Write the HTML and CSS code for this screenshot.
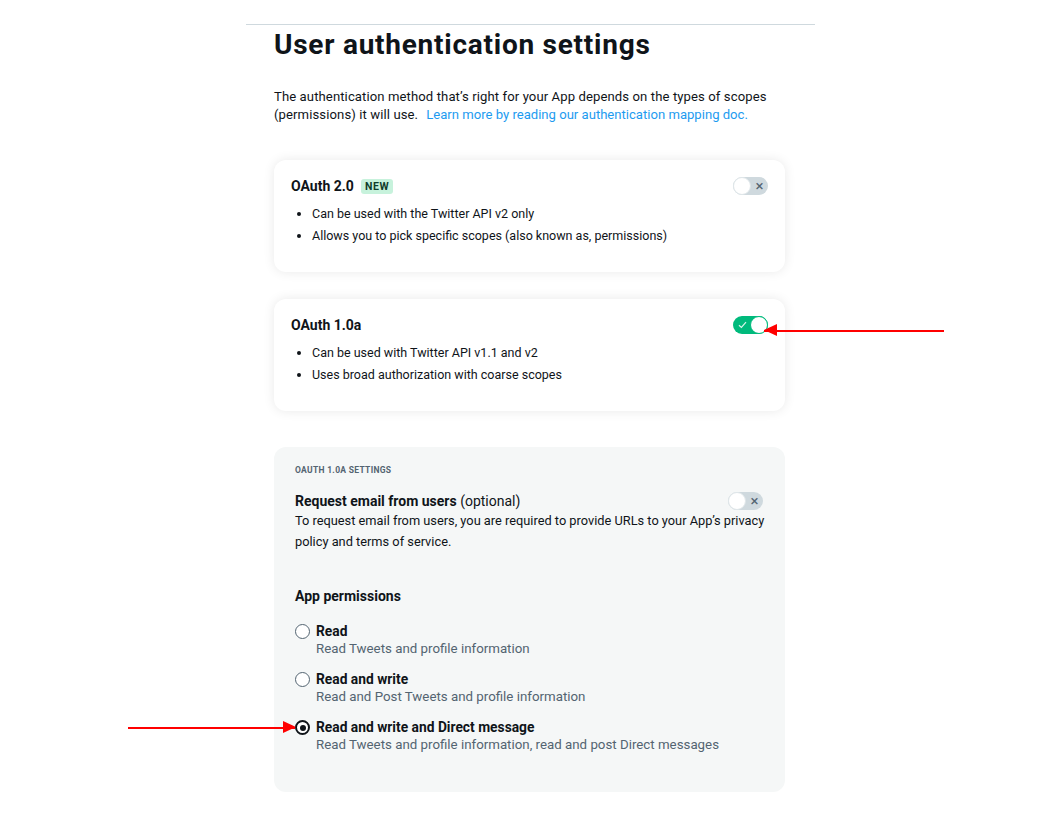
FILE: index.html
```html
<!DOCTYPE html>
<html>
<head>
<meta charset="utf-8">
<link rel="stylesheet" href="styles.css">
</head>
<body>
<div class="page">
  <div class="rule"></div>
  <div class="content">
    <h1 class="title">User authentication settings</h1>
    <p class="intro"><span>The authentication method that’s right for your App depends on the types of scopes (permissions) it will use.</span><span class="sp"></span><a class="link" href="#">Learn more by reading our authentication mapping doc.</a></p>

    <div class="card">
      <div class="card-head">
        <div class="card-title">OAuth 2.0 <span class="badge">NEW</span></div>
        <span class="toggle off"><span class="knob"></span><span class="mark">×</span></span>
      </div>
      <ul class="bullets">
        <li>Can be used with the Twitter API v2 only</li>
        <li>Allows you to pick specific scopes (also known as, permissions)</li>
      </ul>
    </div>

    <div class="card">
      <div class="card-head">
        <div class="card-title">OAuth 1.0a</div>
        <span class="toggle on"><span class="mark">
          <svg width="9" height="8" viewBox="0 0 9 8"><path d="M1 4.2 L3.4 6.5 L8 1.2" fill="none" stroke="#d9f5ea" stroke-width="1.2"/></svg>
        </span><span class="knob"></span>
          <span class="arrow arrow-left"></span>
        </span>
      </div>
      <ul class="bullets">
        <li>Can be used with Twitter API v1.1 and v2</li>
        <li>Uses broad authorization with coarse scopes</li>
      </ul>
    </div>

    <div class="panel">
      <div class="eyebrow">OAUTH 1.0A SETTINGS</div>
      <div class="row">
        <div class="row-title"><b>Request email from users</b> (optional)</div>
        <span class="toggle off"><span class="knob"></span><span class="mark">×</span></span>
      </div>
      <p class="desc">To request email from users, you are required to provide URLs to your App’s privacy policy and terms of service.</p>

      <div class="perm-title">App permissions</div>
      <div class="options">
        <div class="option">
          <span class="radio"></span>
          <div class="opt-text">
            <div class="opt-label">Read</div>
            <div class="opt-desc">Read Tweets and profile information</div>
          </div>
        </div>
        <div class="option">
          <span class="radio"></span>
          <div class="opt-text">
            <div class="opt-label">Read and write</div>
            <div class="opt-desc">Read and Post Tweets and profile information</div>
          </div>
        </div>
        <div class="option">
          <span class="radio checked"><span class="arrow arrow-right"></span></span>
          <div class="opt-text">
            <div class="opt-label">Read and write and Direct message</div>
            <div class="opt-desc">Read Tweets and profile information, read and post Direct messages</div>
          </div>
        </div>
      </div>
    </div>
  </div>
</div>
</body>
</html>
```

FILE: styles.css
```css
* { box-sizing: border-box; }
body {
  margin: 0;
  background: #ffffff;
  font-family: Roboto, "Liberation Sans", sans-serif;
  color: #0f1419;
}
.page {
  width: 569px;
  margin-left: 246px;
  padding-top: 24px;
}
.rule {
  height: 1px;
  background: #cfd9de;
}
.content {
  padding-left: 28px;
  width: 539px;
}
.title {
  margin: 3px 0 0 0;
  font-size: 28px;
  line-height: 34px;
  font-weight: 700;
  letter-spacing: 0.75px;
}
.intro {
  margin: 26px 0 0 0;
  font-size: 13.1px;
  line-height: 18px;
  letter-spacing: 0.1px;
  color: #0f1419;
}
.sp {
  display: inline-block;
  width: 8px;
}
.link {
  color: #1d9bf0;
  text-decoration: none;
  letter-spacing: 0;
}
.card {
  margin-top: 36px;
  width: 511px;
  height: 112px;
  background: #ffffff;
  border-radius: 12px;
  box-shadow: 0 0 12px rgba(0, 0, 0, 0.09);
  padding: 17px 17px 0 17px;
}
.card + .card {
  margin-top: 27px;
}
.card-head {
  display: flex;
  justify-content: space-between;
  align-items: center;
  height: 18px;
}
.card-title {
  font-size: 14px;
  font-weight: 700;
  display: flex;
  align-items: center;
  gap: 7px;
}
.badge {
  background: #c7f2dc;
  color: #0f3d2b;
  font-size: 10.5px;
  font-weight: 700;
  letter-spacing: 0.6px;
  padding: 2px 4px;
  border-radius: 3px;
  line-height: 11px;
}
.bullets {
  margin: 8px 0 0 0;
  padding-left: 21px;
  font-size: 12.5px;
  line-height: 22px;
}
.toggle {
  position: relative;
  width: 35px;
  height: 18px;
  border-radius: 9px;
  display: flex;
  align-items: center;
  flex-shrink: 0;
}
.toggle.off {
  background: #cfd9de;
}
.toggle.on {
  background: #00ba7c;
}
.knob {
  width: 18px;
  height: 18px;
  border-radius: 50%;
  background: #ffffff;
  border: 1px solid #dfe6e9;
}
.toggle.on .knob {
  border-color: #00ba7c;
}
.mark {
  width: 17px;
  display: flex;
  justify-content: center;
  align-items: center;
  font-size: 15px;
  line-height: 18px;
  color: #536471;
}
.toggle.on .mark {
  padding-left: 2px;
}
.arrow {
  position: absolute;
  height: 1.5px;
  background: #ff0000;
}
.arrow::before {
  content: "";
  position: absolute;
  top: -6px;
  border-top: 6.5px solid transparent;
  border-bottom: 6.5px solid transparent;
}
.arrow-left {
  left: 31px;
  top: 14px;
  width: 180px;
}
.arrow-left::before {
  left: 0;
  border-right: 13px solid #ff0000;
}
.arrow-right {
  right: 13px;
  top: 5px;
  width: 167px;
}
.arrow-right::before {
  right: -1px;
  border-left: 13px solid #ff0000;
}
.panel {
  margin-top: 36px;
  width: 511px;
  height: 345px;
  background: #f5f7f7;
  border-radius: 12px;
  padding: 18px 21px 0 21px;
}
.eyebrow {
  font-size: 8.5px;
  font-weight: 700;
  color: #536471;
  line-height: 10px;
  letter-spacing: 0.3px;
}
.row {
  margin-top: 17px;
  display: flex;
  justify-content: space-between;
  align-items: center;
  padding-right: 1px;
}
.row-title {
  font-size: 14px;
}
.desc {
  margin: 0 0 0 0;
  font-size: 12.8px;
  line-height: 21px;
  width: 470px;
}
.perm-title {
  margin-top: 36px;
  font-size: 14px;
  font-weight: 700;
}
.options {
  margin-top: 18px;
  display: flex;
  flex-direction: column;
  gap: 12px;
}
.option {
  display: flex;
  align-items: flex-start;
  gap: 6px;
}
.radio {
  position: relative;
  margin-top: 2px;
  width: 15px;
  height: 15px;
  border-radius: 50%;
  border: 1.5px solid #536471;
  background: #ffffff;
  flex-shrink: 0;
}
.radio.checked {
  border: 2px solid #0f1419;
}
.radio.checked::after {
  content: "";
  position: absolute;
  left: 2.5px;
  top: 2.5px;
  width: 6px;
  height: 6px;
  border-radius: 50%;
  background: #0f1419;
}
.opt-label {
  font-size: 13.8px;
  font-weight: 700;
  line-height: 18px;
}
.opt-desc {
  font-size: 13.3px;
  line-height: 18px;
  color: #536471;
}
```
